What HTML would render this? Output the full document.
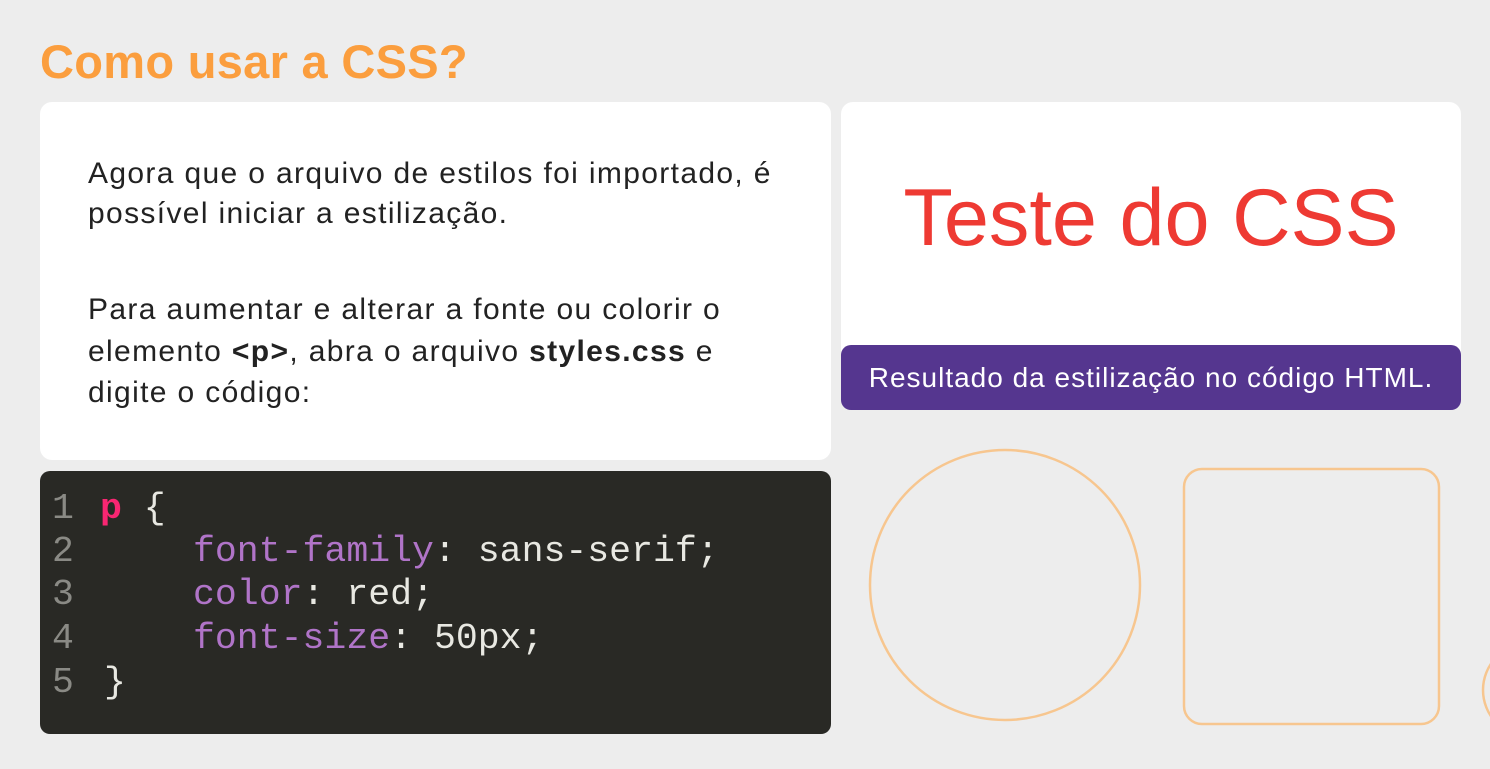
<!DOCTYPE html>
<html><head><meta charset="utf-8"><style>
*{margin:0;padding:0;box-sizing:border-box}
body{width:1490px;height:769px;background:#ededed;position:relative;overflow:hidden;font-family:"Liberation Sans",sans-serif}
.a{position:absolute;white-space:nowrap}
.t{font-size:30px;color:#222;letter-spacing:1.35px;line-height:1}
.m{font-family:"Liberation Mono",monospace;font-size:36.5px;line-height:1;color:#e8e8e2}
.n{color:#8a8a85}
.k{color:#b074c8}
</style></head><body>
<div class="a" style="left:40px;top:38px;font-size:47px;font-weight:bold;color:#fb9e3e;line-height:1;letter-spacing:0.3px">Como usar a CSS?</div>

<div class="a" style="left:40px;top:102px;width:791px;height:358px;background:#fff;border-radius:12px"></div>
<div class="a t" style="left:88px;top:159px">Agora que o arquivo de estilos foi importado, é</div>
<div class="a t" style="left:88px;top:199px">possível iniciar a estilização.</div>
<div class="a t" style="left:88px;top:295px">Para aumentar e alterar a fonte ou colorir o</div>
<div class="a t" style="left:88px;top:337px">elemento <b>&lt;p&gt;</b>, abra o arquivo <b>styles.css</b> e</div>
<div class="a t" style="left:88px;top:378px">digite o código:</div>

<div class="a" style="left:841px;top:102px;width:620px;height:260px;background:#fff;border-radius:12px"></div>
<div class="a" style="left:841px;top:178px;width:620px;text-align:center;font-family:'Liberation Sans',Arial,sans-serif;font-size:81px;color:#ee3a33;line-height:1">Teste do CSS</div>
<div class="a" style="left:841px;top:345px;width:620px;height:65px;background:#55368f;border-radius:10px;color:#fff;font-size:28px;letter-spacing:1px;text-align:center;line-height:65px">Resultado da estilização no código HTML.</div>

<div class="a" style="left:40px;top:471px;width:791px;height:263px;background:#292925;border-radius:10px"></div>
<div class="a m n" style="left:52px;top:491px">1</div><div class="a m" style="left:100px;top:491px"><b style="color:#f92672">p</b> {</div>
<div class="a m n" style="left:52px;top:534px">2</div><div class="a m" style="left:193px;top:534px"><span class="k">font-family</span>: sans-serif;</div>
<div class="a m n" style="left:52px;top:577px">3</div><div class="a m" style="left:193px;top:577px"><span class="k">color</span>: red;</div>
<div class="a m n" style="left:52px;top:621px">4</div><div class="a m" style="left:193px;top:621px"><span class="k">font-size</span>: 50px;</div>
<div class="a m n" style="left:52px;top:665px">5</div><div class="a m" style="left:104px;top:665px">}</div>

<svg class="a" style="left:0;top:0" width="1490" height="769">
<circle cx="1005" cy="585" r="135" fill="none" stroke="#f7c68f" stroke-width="2.5"/>
<rect x="1184" y="469" width="255" height="255" rx="18" fill="none" stroke="#f7c68f" stroke-width="2.5"/>
<circle cx="1530" cy="690" r="47" fill="none" stroke="#f7c68f" stroke-width="2.5"/>
</svg>
</body></html>
